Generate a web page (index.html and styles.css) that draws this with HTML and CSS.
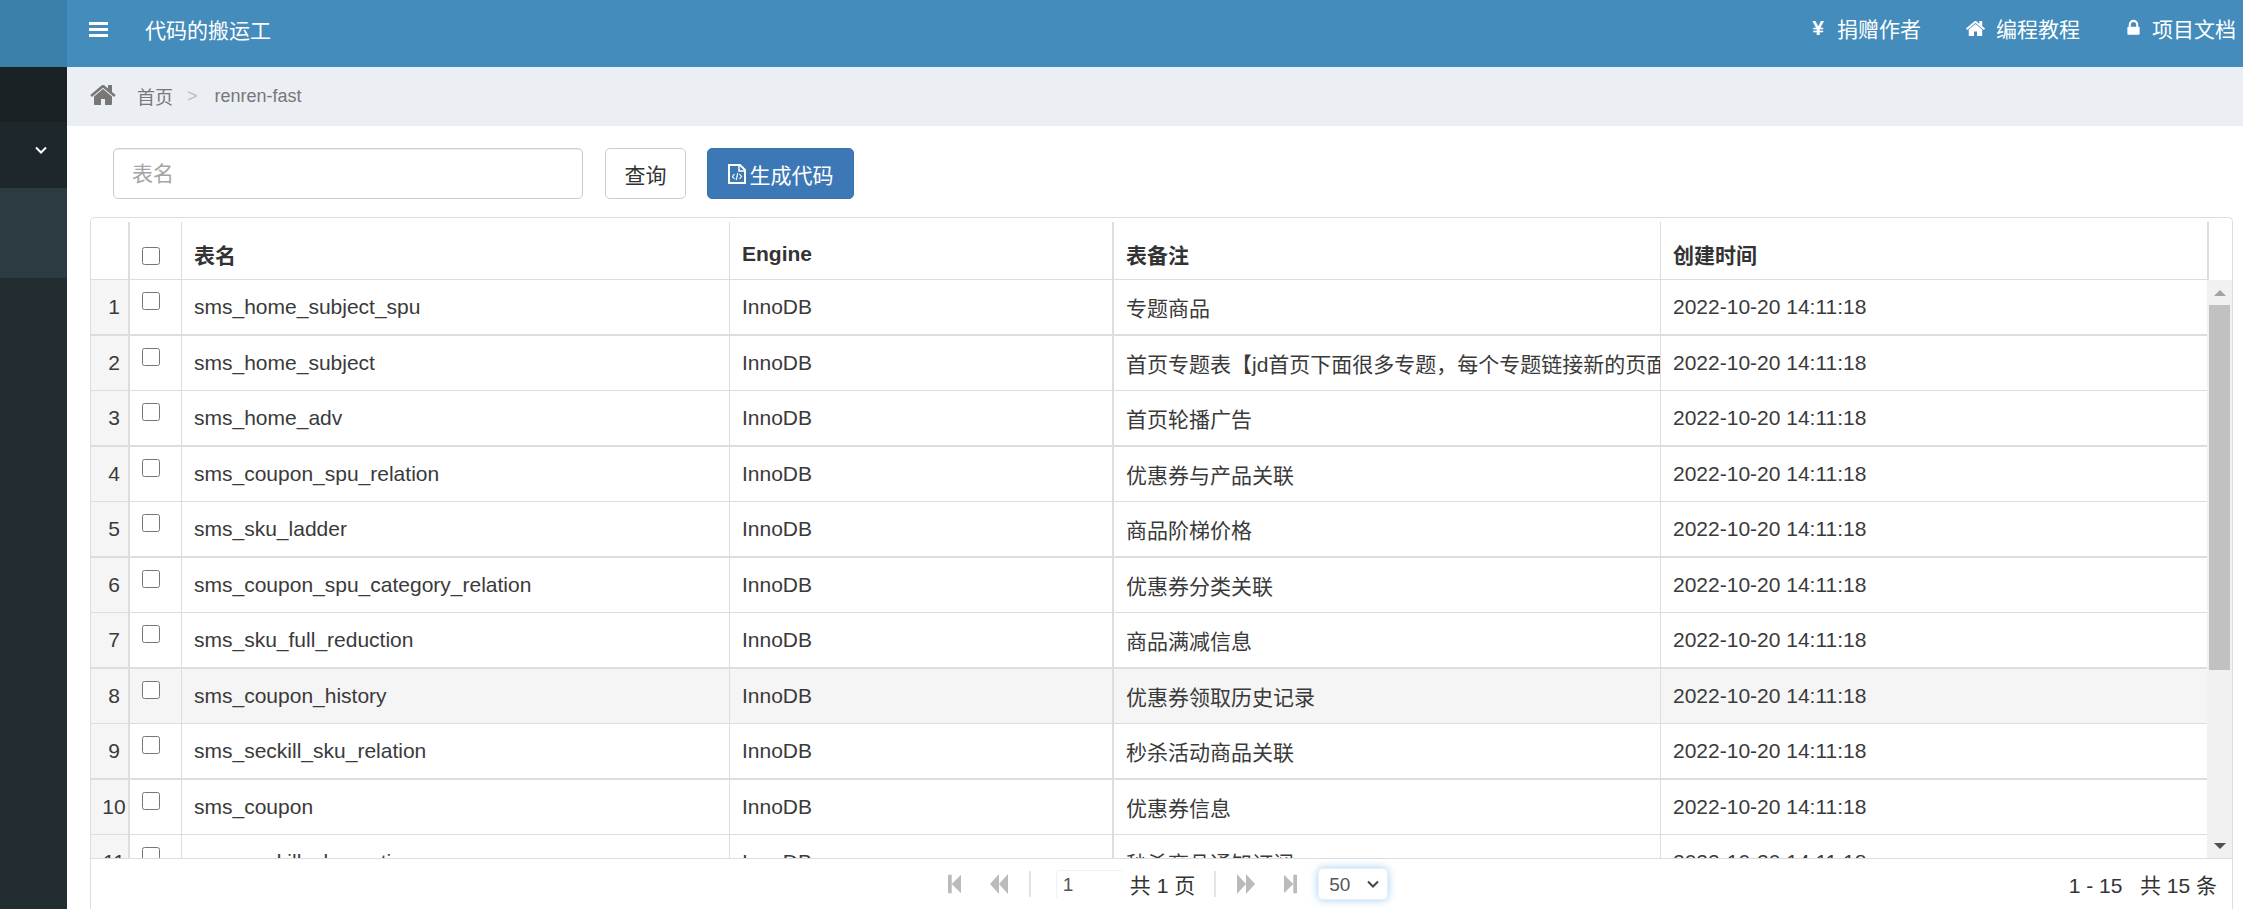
FILE: index.html
```html
<!DOCTYPE html>
<html lang="zh-CN">
<head>
    <meta charset="UTF-8">
    <meta name="viewport" content="width=device-width, initial-scale=1.0">
    <title>代码的搬运工</title>
    <link rel="stylesheet" href="styles.css">
</head>

<body>
    <svg class="icon-defs" aria-hidden="true">
        <symbol id="i-home" viewBox="0 0 1792 1792">
            <path d="M1472 992v480q0 26-19 45t-45 19h-384v-384h-256v384h-384q-26 0-45-19t-19-45v-480q0-1 .5-3t.5-3l575-474 575 474q1 2 1 6zm223-69l-62 74q-8 9-21 11h-3q-13 0-21-7l-692-577-692 577q-12 8-24 7-13-2-21-11l-62-74q-8-10-7-23.5t11-21.5l719-599q32-26 76-26t76 26l244 204v-195q0-14 9-23t23-9h192q14 0 23 9t9 23v408l219 182q10 8 11 21.5t-7 23.5z"/>
        </symbol>
    </svg>

    <aside class="sidebar">
        <div class="logo"></div>
        <div class="side-search"></div>
        <div class="side-menu">
            <svg class="side-arrow" viewBox="0 0 14 10"><path d="M2 2.5l5 5 5-5" fill="none" stroke="#fff" stroke-width="2"/></svg>
        </div>
        <div class="side-active"></div>
    </aside>

    <div class="main">
        <header class="topbar">
            <svg class="menu-toggle" viewBox="0 0 19 15"><path d="M0 0h19v3H0zM0 6h19v3H0zM0 12h19v3H0z" fill="#fff"/></svg>
            <span class="brand">代码的搬运工</span>
            <nav class="top-links">
                <a class="top-link"><span class="yen">¥</span>捐赠作者</a>
                <a class="top-link"><svg class="top-icon"><use href="#i-home"/></svg>编程教程</a>
                <a class="top-link">
                    <svg class="top-icon lock" viewBox="0 0 1792 1792"><path d="M640 768h512v-192q0-106-75-181t-181-75-181 75-75 181v192zm832 96v576q0 40-28 68t-68 28h-960q-40 0-68-28t-28-68v-576q0-40 28-68t68-28h32v-192q0-184 132-316t316-132 316 132 132 316v192h32q40 0 68 28t28 68z"/></svg>项目文档
                </a>
            </nav>
        </header>

        <div class="crumbs">
            <svg class="crumb-home"><use href="#i-home"/></svg>
            <a class="crumb crumb-link">首页</a>
            <span class="crumb-sep">&gt;</span>
            <span class="crumb">renren-fast</span>
        </div>

        <div class="content">
            <div class="toolbar">
                <input class="search" type="text" placeholder="表名">
                <button class="btn">查询</button>
                <button class="btn btn-primary">
                    <svg class="btn-icon" viewBox="0 0 18 20">
                        <path d="M1 1h11l5 5v13H1z" fill="none" stroke="#fff" stroke-width="2"/>
                        <path d="M11 1v6h6" fill="none" stroke="#fff" stroke-width="1.5"/>
                        <path d="M6.5 10l-2 2.5 2 2.5M11.5 10l2 2.5-2 2.5M9.8 9l-1.6 7" fill="none" stroke="#fff" stroke-width="1.2"/>
                    </svg>生成代码
                </button>
            </div>

            <div class="grid">
                <table class="grid-head">
                    <colgroup>
                        <col class="col-num"><col class="col-check"><col class="col-name"><col class="col-engine"><col class="col-remark"><col class="col-time-head">
                    </colgroup>
                    <tr>
                        <th></th>
                        <th class="cell-check"><input type="checkbox"></th>
                        <th>表名</th>
                        <th class="line-thick">Engine</th>
                        <th>表备注</th>
                        <th class="line-thick">创建时间</th>
                    </tr>
                </table>

                <div class="grid-body">
                    <div class="grid-view">
                        <table class="grid-rows">
                            <colgroup>
                                <col class="col-num"><col class="col-check"><col class="col-name"><col class="col-engine"><col class="col-remark"><col class="col-time">
                            </colgroup>
                            <tr><td class="cell-num">1</td><td class="cell-check"><input type="checkbox"></td><td>sms_home_subject_spu</td><td class="line-thick">InnoDB</td><td>专题商品</td><td>2022-10-20 14:11:18</td></tr>
                            <tr><td class="cell-num">2</td><td class="cell-check"><input type="checkbox"></td><td>sms_home_subject</td><td class="line-thick">InnoDB</td><td>首页专题表【jd首页下面很多专题，每个专题链接新的页面，展示专题商品信息】</td><td>2022-10-20 14:11:18</td></tr>
                            <tr><td class="cell-num">3</td><td class="cell-check"><input type="checkbox"></td><td>sms_home_adv</td><td class="line-thick">InnoDB</td><td>首页轮播广告</td><td>2022-10-20 14:11:18</td></tr>
                            <tr><td class="cell-num">4</td><td class="cell-check"><input type="checkbox"></td><td>sms_coupon_spu_relation</td><td class="line-thick">InnoDB</td><td>优惠券与产品关联</td><td>2022-10-20 14:11:18</td></tr>
                            <tr><td class="cell-num">5</td><td class="cell-check"><input type="checkbox"></td><td>sms_sku_ladder</td><td class="line-thick">InnoDB</td><td>商品阶梯价格</td><td>2022-10-20 14:11:18</td></tr>
                            <tr><td class="cell-num">6</td><td class="cell-check"><input type="checkbox"></td><td>sms_coupon_spu_category_relation</td><td class="line-thick">InnoDB</td><td>优惠券分类关联</td><td>2022-10-20 14:11:18</td></tr>
                            <tr><td class="cell-num">7</td><td class="cell-check"><input type="checkbox"></td><td>sms_sku_full_reduction</td><td class="line-thick">InnoDB</td><td>商品满减信息</td><td>2022-10-20 14:11:18</td></tr>
                            <tr class="row-hover"><td class="cell-num">8</td><td class="cell-check"><input type="checkbox"></td><td>sms_coupon_history</td><td class="line-thick">InnoDB</td><td>优惠券领取历史记录</td><td>2022-10-20 14:11:18</td></tr>
                            <tr><td class="cell-num">9</td><td class="cell-check"><input type="checkbox"></td><td>sms_seckill_sku_relation</td><td class="line-thick">InnoDB</td><td>秒杀活动商品关联</td><td>2022-10-20 14:11:18</td></tr>
                            <tr><td class="cell-num">10</td><td class="cell-check"><input type="checkbox"></td><td>sms_coupon</td><td class="line-thick">InnoDB</td><td>优惠券信息</td><td>2022-10-20 14:11:18</td></tr>
                            <tr><td class="cell-num">11</td><td class="cell-check"><input type="checkbox"></td><td>sms_seckill_sku_notice</td><td class="line-thick">InnoDB</td><td>秒杀商品通知订阅</td><td>2022-10-20 14:11:18</td></tr>
                        </table>
                    </div>
                    <div class="scrollbar">
                        <svg class="scroll-arrow" viewBox="0 0 12 6"><path d="M6 0l6 6H0z" fill="#a3a3a3"/></svg>
                        <div class="scroll-thumb"></div>
                        <svg class="scroll-arrow scroll-arrow-down" viewBox="0 0 12 6"><path d="M0 0h12L6 6z" fill="#505050"/></svg>
                    </div>
                </div>

                <div class="pager">
                    <div></div>
                    <div class="pager-center">
                        <svg class="pg-icon" viewBox="0 0 14 20"><path d="M0 0h4v20H0zM14 0v20L4 10z"/></svg>
                        <svg class="pg-icon pg-double" viewBox="0 0 18 20"><path d="M9 0v20L0 10zM18 0v20L9 10z"/></svg>
                        <span class="pg-sep"></span>
                        <input class="pg-input" type="text" value="1">
                        <span class="pg-text">共 1 页</span>
                        <span class="pg-sep pg-sep-right"></span>
                        <svg class="pg-icon pg-next" viewBox="0 0 18 20"><path d="M0 0l9 10-9 10zM9 0l9 10-9 10z"/></svg>
                        <svg class="pg-icon pg-last" viewBox="0 0 14 20"><path d="M0 0l10 10L0 20zM10 0h4v20h-4z"/></svg>
                        <span class="pg-select">
                            <select class="pg-size">
                                <option>50</option>
                                <option>100</option>
                            </select>
                            <svg class="pg-arrow" viewBox="0 0 14 10"><path d="M2 2.5l5 5 5-5" fill="none" stroke="#444" stroke-width="2"/></svg>
                        </span>
                    </div>
                    <div class="pager-info">1 - 15 &nbsp;&nbsp;共 15 条</div>
                </div>
            </div>
        </div>
    </div>
</body>
</html>
```

FILE: styles.css
```css
* {
    box-sizing: border-box;
}

html, body {
    height: 100%;
    margin: 0;
    overflow: hidden;
}

body {
    display: flex;
    font-family: "Liberation Sans", "Noto Sans CJK SC", sans-serif;
    font-size: 21px;
    color: #333;
    background: #fff;
}

.icon-defs {
    display: none;
}

/* sidebar */
.sidebar {
    width: 67px;
    flex-shrink: 0;
    background: #222d32;
}

.logo {
    height: 67px;
    background: #3b80aa;
}

.side-search {
    height: 55px;
    background: #1a2226;
}

.side-menu {
    height: 66px;
    background: #1e282c;
    display: flex;
    justify-content: flex-end;
    padding: 23px 19px 0 0;
}

.side-arrow {
    width: 14px;
    height: 10px;
}

.side-active {
    height: 90px;
    background: #2c3b41;
}

/* top */
.main {
    flex: 1;
    min-width: 0;
    display: flex;
    flex-direction: column;
}

.topbar {
    height: 67px;
    flex-shrink: 0;
    display: flex;
    align-items: center;
    background: #438cbb;
    color: #fff;
    padding: 0 7px 10px 22px;
}

.menu-toggle {
    width: 19px;
    height: 15px;
    margin: 2px 37px 0 0;
}

.top-links {
    margin-left: auto;
    display: flex;
    margin-top: -1px;
}

.top-link {
    display: flex;
    align-items: center;
    margin-left: 44px;
}

.yen {
    font-weight: bold;
    margin-right: 13px;
}

.top-icon {
    width: 21px;
    height: 21px;
    fill: #fff;
    margin-right: 10px;
}

.top-icon.lock {
    width: 19px;
    height: 24px;
    margin-right: 9px;
}

.crumbs {
    height: 59px;
    flex-shrink: 0;
    display: flex;
    align-items: center;
    padding: 0 0 0 22px;
    background: #ebeef3;
    color: #777;
    font-size: 18px;
}

.crumb-home {
    width: 28px;
    height: 28px;
    fill: #777;
    margin: -3px 20px 0 0;
}

.crumb-link {
    margin-top: -2px;
}

.crumb-sep {
    color: #bbb;
    margin: 0 17px 0 14px;
}

/* toolbar */
.content {
    flex: 1;
    min-height: 0;
    padding: 22px 10px 0 23px;
}

.toolbar {
    display: flex;
    gap: 22px;
    margin: 0 0 18px 23px;
}

.search {
    width: 470px;
    height: 51px;
    padding: 0 18px;
    border: 1px solid #ccc;
    border-radius: 5px;
    font: inherit;
    color: #555;
    box-shadow: inset 0 1px 1px rgba(0, 0, 0, 0.075);
}

.search::placeholder {
    color: #a5a5a5;
}

.btn {
    height: 51px;
    width: 81px;
    padding: 0;
    border: 1px solid #ccc;
    border-radius: 5px;
    background: #fff;
    font: inherit;
    color: #333;
}

.btn-primary {
    width: 147px;
    margin-left: -1px;
    border-color: #3b74ad;
    background: #3c78b5;
    color: #fff;
    display: flex;
    align-items: center;
    justify-content: center;
    gap: 4px;
}

.btn-icon {
    width: 18px;
    height: 20px;
}

/* grid */
.grid {
    border: 1px solid #ddd;
    border-bottom: 0;
    border-radius: 5px 5px 0 0;
    padding-top: 4px;
    height: 700px;
}

table {
    table-layout: fixed;
    border-collapse: separate;
    border-spacing: 0;
}

.grid-head {
    width: 2118px;
}

.grid-rows {
    width: 2116px;
}

.col-num { width: 39px; }
.col-check { width: 52px; }
.col-name { width: 548px; }
.col-engine { width: 384px; }
.col-remark { width: 547px; }
.col-time { width: 546px; }
.col-time-head { width: 548px; }

th, td {
    padding: 0 0 0 12px;
    text-align: left;
    white-space: nowrap;
    overflow: hidden;
    border-right: 1px solid #ddd;
}

th {
    height: 58px;
    padding-top: 7px;
    font-weight: bold;
    border-bottom: 1px solid #ddd;
}

th:first-child {
    border-right: 2px solid #ddd;
}

td {
    color: #3a3a3a;
    height: 55px;
    border-bottom: 1px solid #ddd;
}

tr:nth-child(odd) td {
    height: 56px;
    border-bottom-width: 2px;
}

td:last-child {
    border-right: 0;
}

th.line-thick, td.line-thick {
    border-right-width: 2px;
}

.row-hover td {
    background: #f5f5f5;
}

.cell-num {
    padding: 0 0 0 9px;
    text-align: center;
    background: #f5f5f5;
    border-right: 2px solid #ddd;
}

.cell-check {
    padding-left: 12px;
    vertical-align: top;
}

td.cell-check {
    padding-top: 12px;
}

th.cell-check {
    padding-top: 25px;
    vertical-align: top;
}

input[type="checkbox"] {
    width: 18px;
    height: 18px;
    margin: 0;
    display: block;
}

.grid-body {
    display: flex;
    height: 578px;
}

.grid-view {
    width: 2116px;
    overflow: hidden;
}

/* drawn scrollbar, the real one can't be styled the same */
.scrollbar {
    width: 25px;
    display: flex;
    flex-direction: column;
    align-items: center;
    background: #f1f1f1;
}

.scroll-arrow {
    width: 12px;
    height: 6px;
    margin: 10px 0 9px;
}

.scroll-arrow-down {
    margin: auto 0 9px;
}

.scroll-thumb {
    width: 21px;
    height: 365px;
    background: #c1c1c1;
}

/* pager */
.pager {
    height: 51px;
    display: grid;
    grid-template-columns: 1fr auto 1fr;
    align-items: center;
    border-top: 1px solid #ddd;
    padding: 0 15px 0 28px;
}

.pager-center {
    display: flex;
    align-items: center;
}

.pg-icon {
    width: 13px;
    height: 20px;
    fill: #bbb;
}

.pg-double {
    width: 18px;
    margin-left: 29px;
}

.pg-sep {
    width: 2px;
    height: 26px;
    background: #e4e4e4;
    margin: 0 25px 0 21px;
}

.pg-sep-right {
    margin: 0 21px 0 19px;
}

.pg-input {
    width: 67px;
    height: 28px;
    padding: 0 0 0 6px;
    border: 1px solid #f2f2f2;
    border-bottom: 0;
    border-right: 0;
    border-radius: 4px 0 0 0;
    font: inherit;
    font-size: 19px;
    color: #555;
}

.pg-text {
    margin-left: 7px;
}

.pg-next {
    width: 18px;
}

.pg-last {
    margin-left: 29px;
}

.pg-select {
    position: relative;
    margin-left: 21px;
    display: flex;
}

.pg-size {
    appearance: none;
    width: 70px;
    height: 32px;
    padding-left: 10px;
    border: 1px solid #e6f0fa;
    border-radius: 5px;
    background: #fff;
    font: inherit;
    font-size: 19px;
    color: #555;
    box-shadow: 0 0 8px rgba(102, 175, 233, 0.6);
}

.pg-arrow {
    position: absolute;
    right: 8px;
    top: 11px;
    width: 14px;
    height: 10px;
}

.pager-info {
    text-align: right;
}
```
